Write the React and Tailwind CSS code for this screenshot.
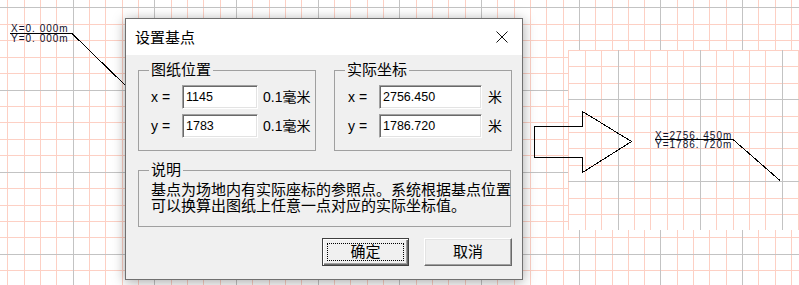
import React from 'react';

const W = 799, H = 285;
const PINK = '#fdd0c4';
const GRAY = '#c3c3c3';

// background drawing: two grids, arrow, coordinate labels
function Canvas(){
  const aV = [], aH = [], bV = [], bH = [];
  for (let k = 0; k < 50; k++) {
    const x = Math.round(7.3 + 16.33 * k);
    if (x >= W) break;
    aV.push({ x, gray: x < 523 ? k % 5 === 4 : k % 5 === 0 });
  }
  for (let i = 0; i < 20; i++) {
    const y = Math.round(7.3 + 16.44 * i);
    if (y >= H) break;
    aH.push({ y, gray: i % 5 === 0 });
  }
  for (let j = 0; j < 16; j++) {
    const x = Math.round(568.3 + 16.43 * j);
    if (x >= W) break;
    bV.push({ x, gray: j % 5 === 3 });
  }
  for (let i = 0; i < 11; i++) {
    const y = Math.round(50 + 16.4 * i);
    if (y > 228) break;
    bH.push({ y, gray: i % 5 === 3 });
  }
  const txt = { fontFamily: "'Liberation Sans', Arial, sans-serif", fontSize: 10, letterSpacing: 1, fill: '#10102a' };

  return (
    <svg width={W} height={H} className="absolute inset-0" shapeRendering="crispEdges">
      <rect width={W} height={H} fill="#fff" />
      {[false, true].map(g => (
        <g key={'a' + g} fill={g ? GRAY : PINK}>
          {aV.filter(l => l.gray === g).map(l => <rect key={l.x} x={l.x} y={0} width={1} height={H} />)}
          {aH.filter(l => l.gray === g).map(l => <rect key={l.y} x={0} y={l.y} width={W} height={1} />)}
        </g>
      ))}

      <rect x={568} y={50} width={W - 568} height={180} fill="#fff" />
      {[false, true].map(g => (
        <g key={'b' + g} fill={g ? GRAY : PINK}>
          {bV.filter(l => l.gray === g).map(l => <rect key={l.x} x={l.x} y={50} width={1} height={180} />)}
          {bH.filter(l => l.gray === g).map(l => <rect key={l.y} x={568} y={l.y} width={W - 568} height={1} />)}
        </g>
      ))}

      <g stroke="#000" strokeWidth="1" fill="none">
        <line x1="10" y1="33.5" x2="72" y2="33.5" />
        <line x1="72" y1="33.5" x2="127" y2="87" />
        <polygon points="534.5,126.5 582.5,126.5 582.5,111.5 631.5,141.5 582.5,172.5 582.5,157.5 534.5,157.5" />
        <line x1="655" y1="139.5" x2="733" y2="139.5" />
        <line x1="733" y1="139.5" x2="780" y2="180.5" />
      </g>
      <g style={txt} shapeRendering="auto">
        <text x="11" y="32">X=0. 000m</text>
        <text x="11" y="41.5">Y=0. 000m</text>
        <text x="655" y="138.5">X=2756. 450m</text>
        <text x="655" y="148">Y=1786. 720m</text>
      </g>
    </svg>
  );
}

function GroupBox({ label, className, children }){
  return (
    <div className={`relative border border-[#a0a0a0] ${className}`}>
      <span className="absolute left-[10px] -top-[11px] px-[2px] bg-[#f0f0f0] text-[15px] leading-[18px]">{label}</span>
      {children}
    </div>
  );
}

function Field({ name, value, width, unit, unitGap }){
  return (
    <div className="flex items-center h-[24px]">
      <span className="w-[31px] text-[14px] font-['Liberation_Sans',sans-serif]">{name} =</span>
      <div className={`${width} h-[24px] bg-white border border-t-[#a0a0a0] border-l-[#a0a0a0] border-b-white border-r-white shadow-[inset_1px_1px_0_#696969,inset_-1px_-1px_0_#e3e3e3] pl-[3px] flex items-center text-[12.5px] font-['Liberation_Sans',sans-serif]`}>{value}</div>
      <span className={`${unitGap} text-[14px] font-['Liberation_Sans','Noto_Sans_CJK_SC',sans-serif]`}>{unit}</span>
    </div>
  );
}

export default function App(){
  return (
    <div className="relative w-[799px] h-[285px] overflow-hidden bg-white text-black font-['Noto_Sans_CJK_SC',sans-serif]">
      <Canvas />

      <div className="absolute left-[125px] top-[18px] w-[398px] h-[262px] border border-[#707070] bg-[#f0f0f0] flex flex-col shadow-[0_2px_12px_rgba(0,0,0,0.35)]">
        <div className="h-[36px] bg-white flex items-center justify-between pl-[9px] pr-[14px]">
          <span className="text-[15px] leading-[18px]">设置基点</span>
          <svg width="12" height="12" viewBox="0 0 12 12"><path d="M0.5 0.5L11.5 11.5M11.5 0.5L0.5 11.5" stroke="#111" strokeWidth="1" /></svg>
        </div>

        <div className="flex flex-col pl-[12px] pr-[10px] pt-[15px]">
          <div className="flex gap-[18px]">
            <GroupBox label="图纸位置" className="w-[178px] h-[81px] pt-[14px] pl-[12px] flex flex-col gap-[5px]">
              <Field name="x" value="1145" width="w-[76px]" unit="0.1毫米" unitGap="ml-[5px]" />
              <Field name="y" value="1783" width="w-[76px]" unit="0.1毫米" unitGap="ml-[5px]" />
            </GroupBox>
            <GroupBox label="实际坐标" className="w-[178px] h-[81px] pt-[14px] pl-[13px] flex flex-col gap-[5px]">
              <Field name="x" value="2756.450" width="w-[103px]" unit="米" unitGap="ml-[6px]" />
              <Field name="y" value="1786.720" width="w-[103px]" unit="米" unitGap="ml-[6px]" />
            </GroupBox>
          </div>

          <GroupBox label="说明" className="mt-[19px] w-[373px] h-[57px] pt-[10px] pl-[12px]">
            <p className="text-[15px] leading-[16px] whitespace-nowrap">基点为场地内有实际座标的参照点。系统根据基点位置<br />可以换算出图纸上任意一点对应的实际坐标值。</p>
          </GroupBox>

          <div className="flex justify-end gap-[15px] mt-[11px]">
            <button className="relative w-[87px] h-[28px] border border-[#404040] bg-[#f0f0f0] shadow-[inset_1px_1px_0_#fff,inset_-1px_-1px_0_#696969,inset_-2px_-2px_0_#a0a0a0] text-[15px] leading-[18px] pb-[2px]">
              <span className="absolute inset-[4px] border border-dotted border-black"></span>
              确定
            </button>
            <button className="w-[88px] h-[28px] bg-[#f0f0f0] border border-t-white border-l-white border-b-[#696969] border-r-[#696969] shadow-[inset_-1px_-1px_0_#a0a0a0,inset_1px_1px_0_#e3e3e3] text-[15px] leading-[18px] pb-[2px]">取消</button>
          </div>
        </div>
      </div>
    </div>
  );
}
